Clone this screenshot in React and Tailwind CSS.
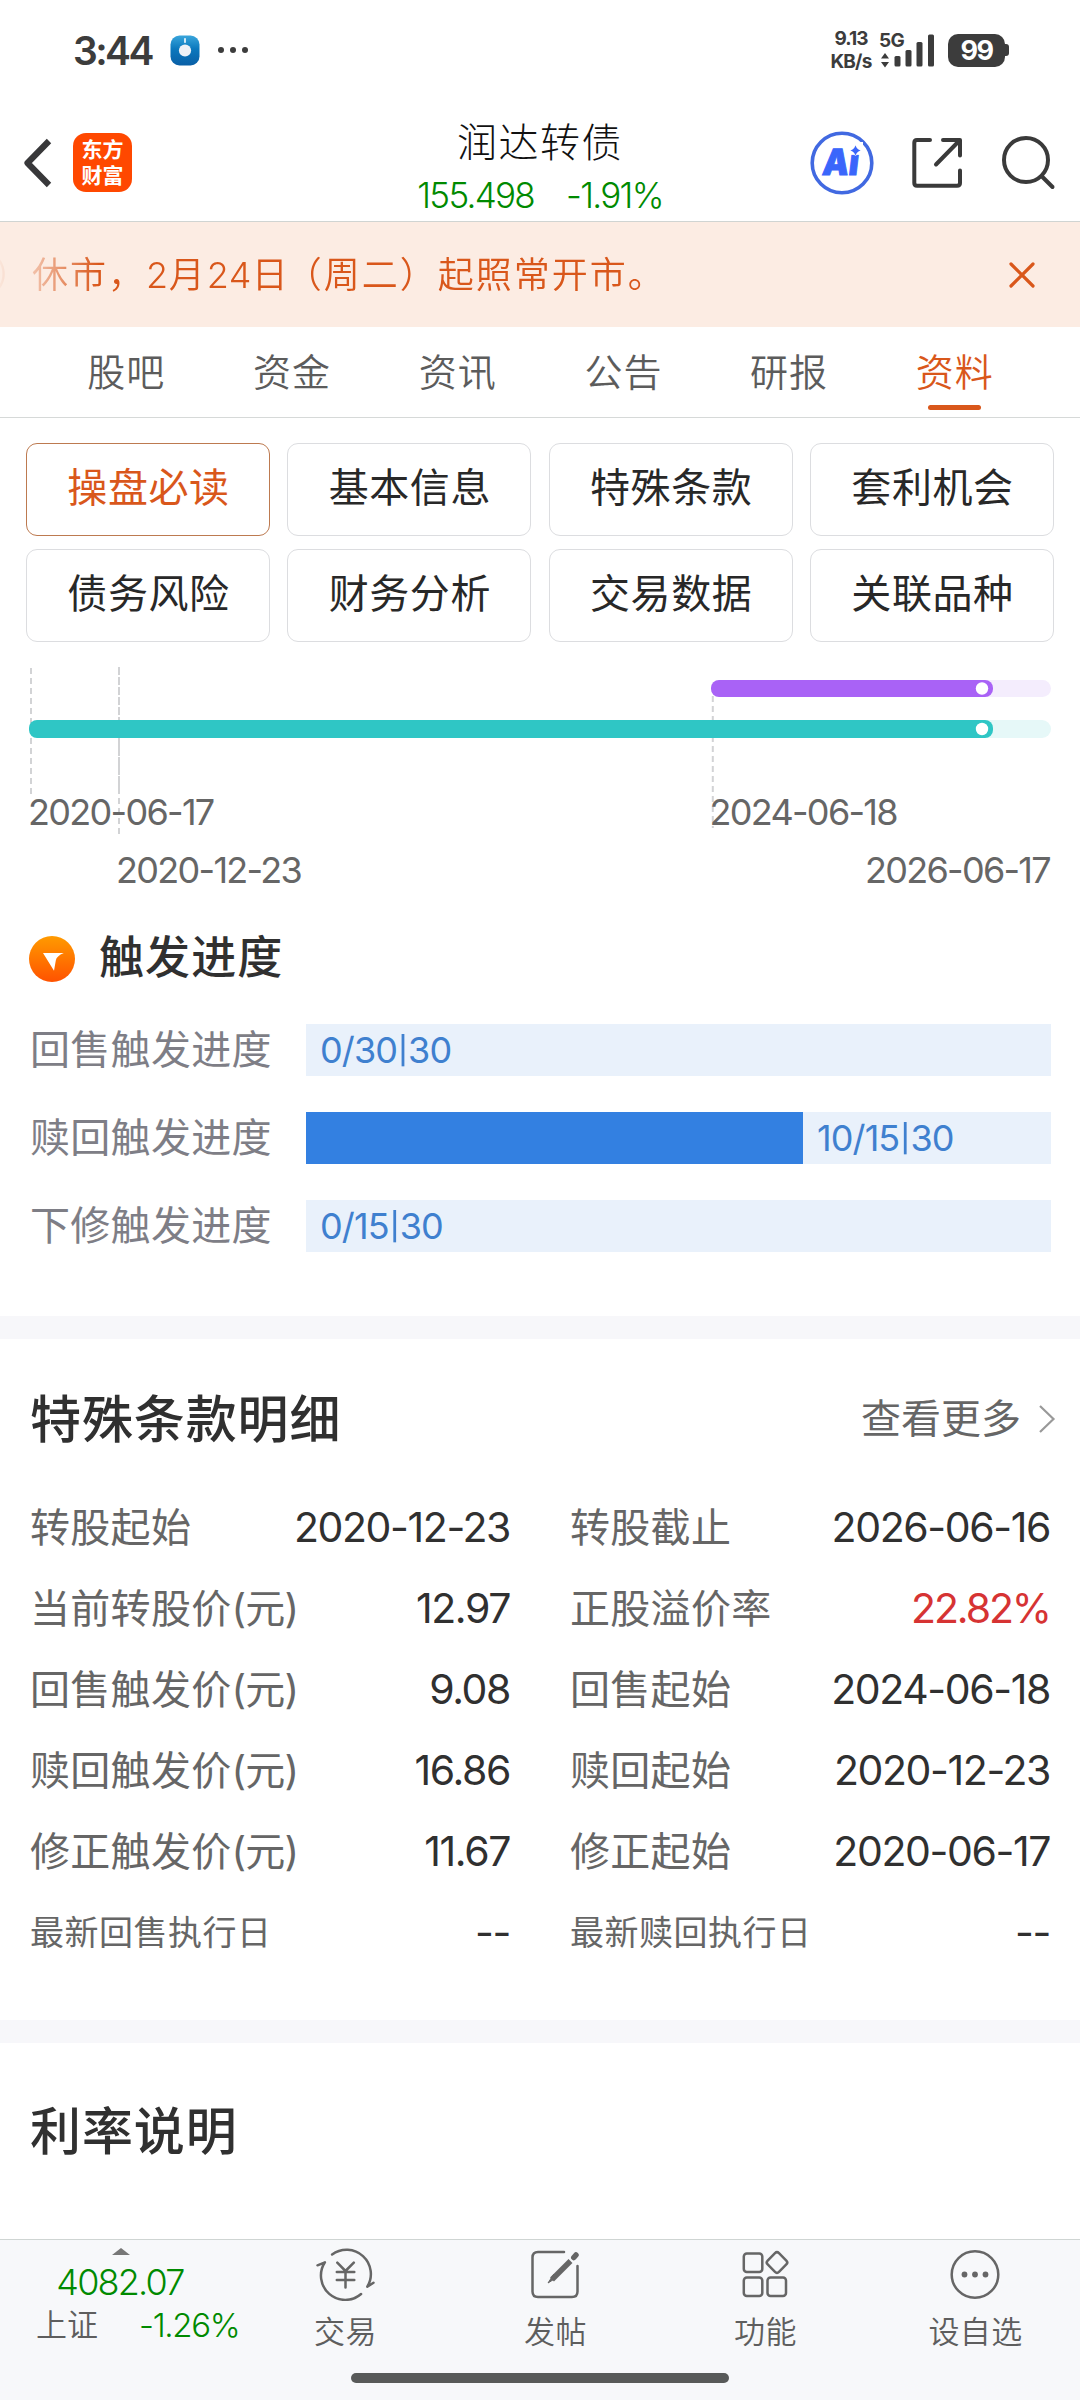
import React from "react";

const ORANGE = "#d9571b";

function StatusBar() {
  return (
    <div className="flex h-[100px] items-center text-[#3c3c3c]">
      <div className="ml-[73px] w-[97px] text-[39px] leading-none font-semibold tracking-[-2.6px]">3:44</div>
      <svg width="30" height="31" viewBox="0 0 30 31" className="shrink-0">
        <defs>
          <linearGradient id="app" x1="0" y1="0" x2="0" y2="1">
            <stop offset="0" stopColor="#3aa6dc" />
            <stop offset="0.45" stopColor="#0b78bd" />
            <stop offset="1" stopColor="#0a5fa6" />
          </linearGradient>
        </defs>
        <rect x="0.5" y="0.5" width="29" height="30" rx="9" fill="url(#app)" />
        <rect x="14.2" y="3" width="1.6" height="5" rx="0.8" fill="#fff" />
        <circle cx="15" cy="15.5" r="6.1" fill="#eef1f6" />
      </svg>
      <svg width="32" height="8" viewBox="0 0 32 8" className="ml-[17px]" fill="#3c3c3c">
        <circle cx="4" cy="4" r="3" />
        <circle cx="16" cy="4" r="3" />
        <circle cx="28" cy="4" r="3" />
      </svg>
      <div className="ml-[580px] flex w-[44px] flex-col items-center gap-[4px] text-[19px] leading-[19px] font-bold">
        <span className="tracking-[-1px]">9.13</span>
        <span className="tracking-[-0.8px]">KB/s</span>
      </div>
      <div className="ml-[6px] flex h-[38px] w-[56px] items-end">
        <div className="relative h-full w-full">
          <div className="text-[19px] leading-[19px] font-bold tracking-[-0.6px]">5G</div>
          <svg width="56" height="38" viewBox="0 0 56 38" className="absolute top-[1px] left-0" fill="#3c3c3c">
            <path d="M2 26.5 L6 21 L10 26.5Z M2 30 H10 L6 35.5Z" />
            <rect x="15.5" y="24" width="6" height="10.5" rx="1.5" />
            <rect x="26.5" y="18" width="6" height="16.5" rx="1.5" />
            <rect x="37.5" y="10" width="6" height="24.5" rx="1.5" />
            <rect x="49" y="2.5" width="6" height="32" rx="1.5" />
          </svg>
        </div>
      </div>
      <div className="ml-[13px] flex items-center">
        <div className="flex h-[33px] w-[57px] items-center justify-center rounded-[10px] bg-[#3c3c3c] text-[27px] leading-none font-bold tracking-[-1.5px] text-white">
          99
        </div>
        <div className="h-[12px] w-[4px] rounded-r-[3px] bg-[#3c3c3c]" />
      </div>
    </div>
  );
}

function Header() {
  return (
    <div className="flex h-[122px] border-b border-[#d0d4d2]">
      <div className="flex w-[360px] items-start">
        <svg width="32" height="56" viewBox="0 0 32 56" className="mt-[35px] ml-[21px]" fill="none" stroke="#38383a" strokeWidth="6.2">
          <path d="M28 6 L6.500 28 L28 50" strokeLinejoin="round" />
        </svg>
        <div className="mt-[33px] ml-[20px] flex h-[59px] w-[59px] flex-col items-center justify-center rounded-[13px] bg-[#ff4800] text-[21px] leading-[26px] font-bold text-white">
          <span>东方</span>
          <span>财富</span>
        </div>
      </div>
      <div className="flex w-[360px] flex-col items-center">
        <div className="mt-[23px] text-[40px] leading-[40px] font-light tracking-[1.5px] text-[#111]">润达转债</div>
        <div className="mt-[15px] flex gap-[32px] text-[35px] leading-[35px] font-light tracking-[-1.7px] text-[#008a00]">
          <span>155.498</span>
          <span>-1.91%</span>
        </div>
      </div>
      <div className="flex w-[360px] items-start">
        <svg width="66" height="66" viewBox="0 0 66 66" className="mt-[30px] ml-[89px]">
          <circle cx="33" cy="33" r="29.8" fill="none" stroke="#4169e1" strokeWidth="3.6" />
          <g fill="#3a66fb" stroke="#3a66fb" strokeWidth="1" fontSize="36" fontWeight="900" fontFamily="Inter">
            <text x="0" y="0" transform="matrix(0.92 0 -0.12 1 12.5 45)">Ai</text>
          </g>
          <rect x="39" y="12" width="15" height="12.500" fill="#fff" />
          <path d="M46.500 15 Q47.800 19.200 52 20.500 Q47.800 21.800 46.500 26 Q45.200 21.800 41 20.500 Q45.200 19.200 46.500 15Z" fill="#3a66fb" stroke="#fff" strokeWidth="0.500" />
        </svg>
        <svg width="54" height="54" viewBox="0 0 54 54" className="mt-[36px] ml-[35px]" fill="none" stroke="#3a3a3a" strokeWidth="4" strokeLinejoin="round" strokeLinecap="round">
          <path d="M20 4 H7 Q4.3 4 4.3 6.700 V47 Q4.3 49.800 7 49.800 H47 Q50 49.800 50 47 V34.500" />
          <path d="M33 4 H50 V19.500" />
          <path d="M49 5 L26 28.500" />
        </svg>
        <svg width="56" height="56" viewBox="0 0 56 56" className="mt-[34px] ml-[36px]" fill="none" stroke="#3a3a3a" strokeWidth="4">
          <circle cx="26" cy="26" r="22" />
          <path d="M42 42.500 L52.500 53" strokeLinecap="round" />
        </svg>
      </div>
    </div>
  );
}

function Notice() {
  return (
    <div className="flex h-[105px] items-center overflow-hidden bg-[#fcece3] text-[#d9571b]">
      <div className="-ml-[6px] flex w-[1015px] overflow-hidden text-[36px] leading-[50px] font-[350] tracking-[2px] whitespace-nowrap [mask-image:linear-gradient(to_right,transparent_0px,rgba(0,0,0,0.35)_45px,black_105px)]">
        <span>）休市，</span>
        <span className="tracking-[0.5px]">2</span>
        <span>月</span>
        <span className="tracking-[0.5px]">24</span>
        <span className="tracking-[-2px]">日</span>
        <span>（周二）起照常开市。</span>
      </div>
      <svg width="26" height="26" viewBox="0 0 26 26" fill="none" stroke={ORANGE} strokeWidth="3.2" strokeLinecap="round">
        <path d="M2 2 L24 24 M24 2 L2 24" />
      </svg>
    </div>
  );
}

const TABS = ["股吧", "资金", "资讯", "公告", "研报", "资料"];

function Tabs() {
  return (
    <div className="flex h-[91px] border-b border-[#d6d9d8] pl-[43px]">
      {TABS.map((t) => (
        <div key={t} className="flex w-[165.7px] flex-col items-center">
          <span className={t === "资料" ? "mt-[24px] pl-[1px] text-[38px] leading-[42px] font-[350] tracking-[1px] text-[#d9571b]" : "mt-[24px] pl-[1px] text-[38px] leading-[42px] font-[350] tracking-[1px] text-[#5c5c5c]"}>{t}</span>
          {t === "资料" && <span className="mt-[12px] h-[5px] w-[53px] rounded-full bg-[#d9571b]" />}
        </div>
      ))}
    </div>
  );
}

const CHIPS = ["操盘必读", "基本信息", "特殊条款", "套利机会", "债务风险", "财务分析", "交易数据", "关联品种"];

function Chips() {
  return (
    <div className="grid grid-cols-4 gap-x-[17.3px] gap-y-[13px] px-[26px] pt-[25px]">
      {CHIPS.map((t, i) => (
        <div
          key={t}
          className={
            i === 0
              ? "flex h-[93px] items-center justify-center rounded-[11px] border border-[#bd7a50] pb-[3px] pl-[1px] text-[40px] leading-none tracking-[0.6px] text-[#d9571b]"
              : "flex h-[93px] items-center justify-center rounded-[11px] border border-[#dcdde0] pb-[3px] pl-[1px] text-[40px] leading-none tracking-[0.6px] text-[#282828]"
          }
        >
          {t}
        </div>
      ))}
    </div>
  );
}

function Timeline() {
  return (
    <svg width="1080" height="258" viewBox="0 642 1080 258" className="block shrink-0">
      <g stroke="#d2d3d5" strokeWidth="2" fill="none">
        <path d="M31 668 V794" strokeDasharray="6 4" />
        <path d="M119 667 V737" strokeDasharray="8 2" />
        <path d="M119 738 V794" strokeDasharray="18 1" />
        <path d="M119 798 V834" strokeDasharray="6 4" />
        <path d="M712.800 690 V828" strokeDasharray="6 4" strokeDashoffset="4" />
      </g>
      <rect x="940" y="680" width="111" height="17" rx="8.500" fill="#f4edfd" />
      <rect x="711" y="680" width="282" height="17" rx="8" fill="#a962f6" />
      <circle cx="982" cy="688.500" r="6.200" fill="#fff" />
      <rect x="940" y="720" width="111" height="18" rx="9" fill="#e6f8f8" />
      <rect x="29" y="720" width="964" height="18" rx="8" fill="#2fc6c5" />
      <circle cx="982" cy="729" r="6.200" fill="#fff" />
      <g fill="#666" fontSize="36" letterSpacing="-1.7">
        <text x="28" y="825">2020-06-17</text>
        <text x="709.500" y="825">2024-06-18</text>
        <text x="116" y="883">2020-12-23</text>
        <text x="1050" y="883" textAnchor="end">2026-06-17</text>
      </g>
    </svg>
  );
}

const PROGRESS = [
  { label: "回售触发进度", fill: 0, done: "0/30", span: "30" },
  { label: "赎回触发进度", fill: 497, done: "10/15", span: "30" },
  { label: "下修触发进度", fill: 0, done: "0/15", span: "30" },
];

function Progress() {
  return (
    <div className="h-[416px]">
      <div className="flex h-[124px] items-start pl-[29px]">
        <svg width="46" height="46" viewBox="0 0 46 46" className="mt-[36px]">
          <defs>
            <linearGradient id="badge" x1="0" y1="0" x2="0" y2="1">
              <stop offset="0" stopColor="#ff9b00" />
              <stop offset="1" stopColor="#ff5200" />
            </linearGradient>
          </defs>
          <circle cx="23" cy="23" r="23" fill="url(#badge)" />
          <path d="M14 17 H34.800 Q27.500 20 26.800 24.500 L25 34.800 Z" fill="#fff" />
        </svg>
        <div className="mt-[34px] ml-[24px] text-[45px] leading-[48px] font-medium tracking-[1.1px] text-[#303030]">触发进度</div>
      </div>
      <div className="flex flex-col gap-[36px]">
        {PROGRESS.map((p) => (
          <div key={p.label} className="flex h-[52px] items-center">
            <div className="w-[306px] pl-[30px] text-[40px] leading-none tracking-[0.3px] text-[#7e7e86]">{p.label}</div>
            <div className="flex h-[52px] w-[745px] items-center bg-[#e9f1fb]">
              <div className="h-[52px] bg-[#3380e1]" style={{ width: p.fill }} />
              <span className="ml-[14px] text-[36px] leading-none tracking-[-0.9px] text-[#3f80cf]">
                {p.done}
                <span className="inline-block origin-[50%_55%] scale-y-75">|</span>
                {p.span}
              </span>
            </div>
          </div>
        ))}
      </div>
    </div>
  );
}

const TERMS = [
  ["转股起始", "", "2020-12-23", "转股截止", "2026-06-16"],
  ["当前转股价", "(元)", "12.97", "正股溢价率", "22.82%"],
  ["回售触发价", "(元)", "9.08", "回售起始", "2024-06-18"],
  ["赎回触发价", "(元)", "16.86", "赎回起始", "2020-12-23"],
  ["修正触发价", "(元)", "11.67", "修正起始", "2020-06-17"],
  ["最新回售执行日", "", "--", "最新赎回执行日", "--"],
];

function Cell({ label, unit, value }) {
  const small = label.startsWith("最新");
  return (
    <div className="flex w-[480px] items-center justify-between">
      <span className={small ? "text-[34px] leading-none tracking-[0.5px] text-[#666]" : "text-[40px] leading-none tracking-[0.3px] text-[#666]"}>
        {label}
        {unit && <span className="tracking-[-0.8px]">{unit}</span>}
      </span>
      <span className={value.endsWith("%") ? "text-[41px] leading-none tracking-[-2.1px] text-[#d63333]" : "text-[41px] leading-none tracking-[-1.4px] text-[#303030]"}>{value}</span>
    </div>
  );
}

function Terms() {
  return (
    <div className="h-[681px]">
      <div className="flex h-[148px] items-center justify-between pr-[24px] pl-[30px]">
        <div className="mt-[12px] text-[51px] leading-none font-medium tracking-[0.9px] text-[#303030]">特殊条款明细</div>
        <div className="mt-[12px] flex items-center text-[40px] leading-none text-[#666]">
          查看更多
          <svg width="18" height="30" viewBox="0 0 18 30" className="ml-[17px]" fill="none" stroke="#999" strokeWidth="2.200">
            <path d="M2 2 L15.500 15 L2 28" />
          </svg>
        </div>
      </div>
      {TERMS.map((r) => (
        <div key={r[0]} className="flex h-[81px] items-center justify-between pr-[30px] pl-[30px]">
          <Cell label={r[0]} unit={r[1]} value={r[2]} />
          <Cell label={r[3]} value={r[4]} />
        </div>
      ))}
    </div>
  );
}

function NavItem({ label, children }) {
  return (
    <div className="flex w-[210px] flex-col items-center">
      <svg width="62" height="54" viewBox="0 0 62 54" className="mt-[7px]" fill="none" stroke="#666" strokeWidth="2.500" strokeLinecap="round" strokeLinejoin="round">
        {children}
      </svg>
      <span className="mt-[14px] pl-[1px] text-[31px] leading-[34px] font-[350] tracking-[0.4px] text-[#5e5e5e]">{label}</span>
    </div>
  );
}

function BottomNav() {
  return (
    <div className="flex h-[161px] flex-col border-t border-[#cfd5d3] bg-[#f7f8fa]">
      <div className="flex h-[133px]">
        <div className="flex w-[240px] flex-col items-center">
          <svg width="18" height="7" viewBox="0 0 18 7" className="mt-[8px] mr-[-2px]">
            <path d="M0 7 L9 0 L18 7Z" fill="#777" />
          </svg>
          <div className="mt-[9px] text-[36px] leading-[36px] font-light tracking-[-1.8px] text-[#008a00]">4082.07</div>
          <div className="mt-[8px] flex w-full items-center pl-[36px]">
            <span className="w-[103px] text-[31px] leading-[34px] font-[350] text-[#5e5e5e]">上证</span>
            <span className="text-[33px] leading-[34px] font-light tracking-[-1.3px] text-[#008a00]">-1.26%</span>
          </div>
        </div>
        <NavItem label="交易">
          <path d="M18.100 7.500 A24.300 24.300 0 0 1 53.300 39.700 L59.500 35.700" />
          <path d="M47.100 47 A24.300 24.300 0 0 1 10.900 15.300 L3.500 18.300" />
          <path d="M23.300 15.700 L31.500 24 L39.800 15.700 M31.500 24 V40.500 M22.800 25 H40.300 M22.800 33 H40.300" />
        </NavItem>
        <NavItem label="发帖">
          <path d="M40 5 H14 Q8.500 5 8.500 10.500 V44.500 Q8.500 50 14 50 H48 Q53.500 50 53.500 44.500 V19" />
          <path d="M46.500 14 L28 32.500" strokeWidth="5.500" strokeLinecap="butt" />
          <path d="M29.500 27.500 L24 36 L32 31Z" fill="#666" strokeWidth="1" />
          <path d="M49.800 10.500 L52 8" strokeWidth="5.500" />
        </NavItem>
        <NavItem label="功能">
          <rect x="9.800" y="6.500" width="18.500" height="18.500" rx="3" />
          <rect x="9.800" y="30.500" width="18.500" height="18.500" rx="3" />
          <rect x="33.500" y="30.500" width="18.500" height="18.500" rx="3" />
          <rect x="35" y="7.500" width="16" height="16" rx="2.800" transform="rotate(45 43 15.500)" />
        </NavItem>
        <NavItem label="设自选">
          <circle cx="31" cy="27.500" r="23.300" />
          <g fill="#666" stroke="none">
            <circle cx="20.500" cy="27.500" r="2.900" />
            <circle cx="31" cy="27.500" r="2.900" />
            <circle cx="41.500" cy="27.500" r="2.900" />
          </g>
        </NavItem>
      </div>
      <div className="h-[10px] w-[378px] self-center rounded-full bg-[#585a59]" />
    </div>
  );
}

export default function App() {
  return (
    <div className="flex h-[2400px] w-[1080px] flex-col overflow-hidden bg-white font-['Inter','Noto_Sans_CJK_SC',sans-serif] font-normal">
      <StatusBar />
      <Header />
      <Notice />
      <Tabs />
      <Chips />
      <Timeline />
      <Progress />
      <div className="h-[23px] bg-[#f7f7fa]" />
      <Terms />
      <div className="h-[23px] bg-[#f7f7fa]" />
      <div className="flex h-[196px] items-center pb-[20px] pl-[30px] text-[51px] leading-none font-medium tracking-[0.9px] text-[#303030]">利率说明</div>
      <BottomNav />
    </div>
  );
}
